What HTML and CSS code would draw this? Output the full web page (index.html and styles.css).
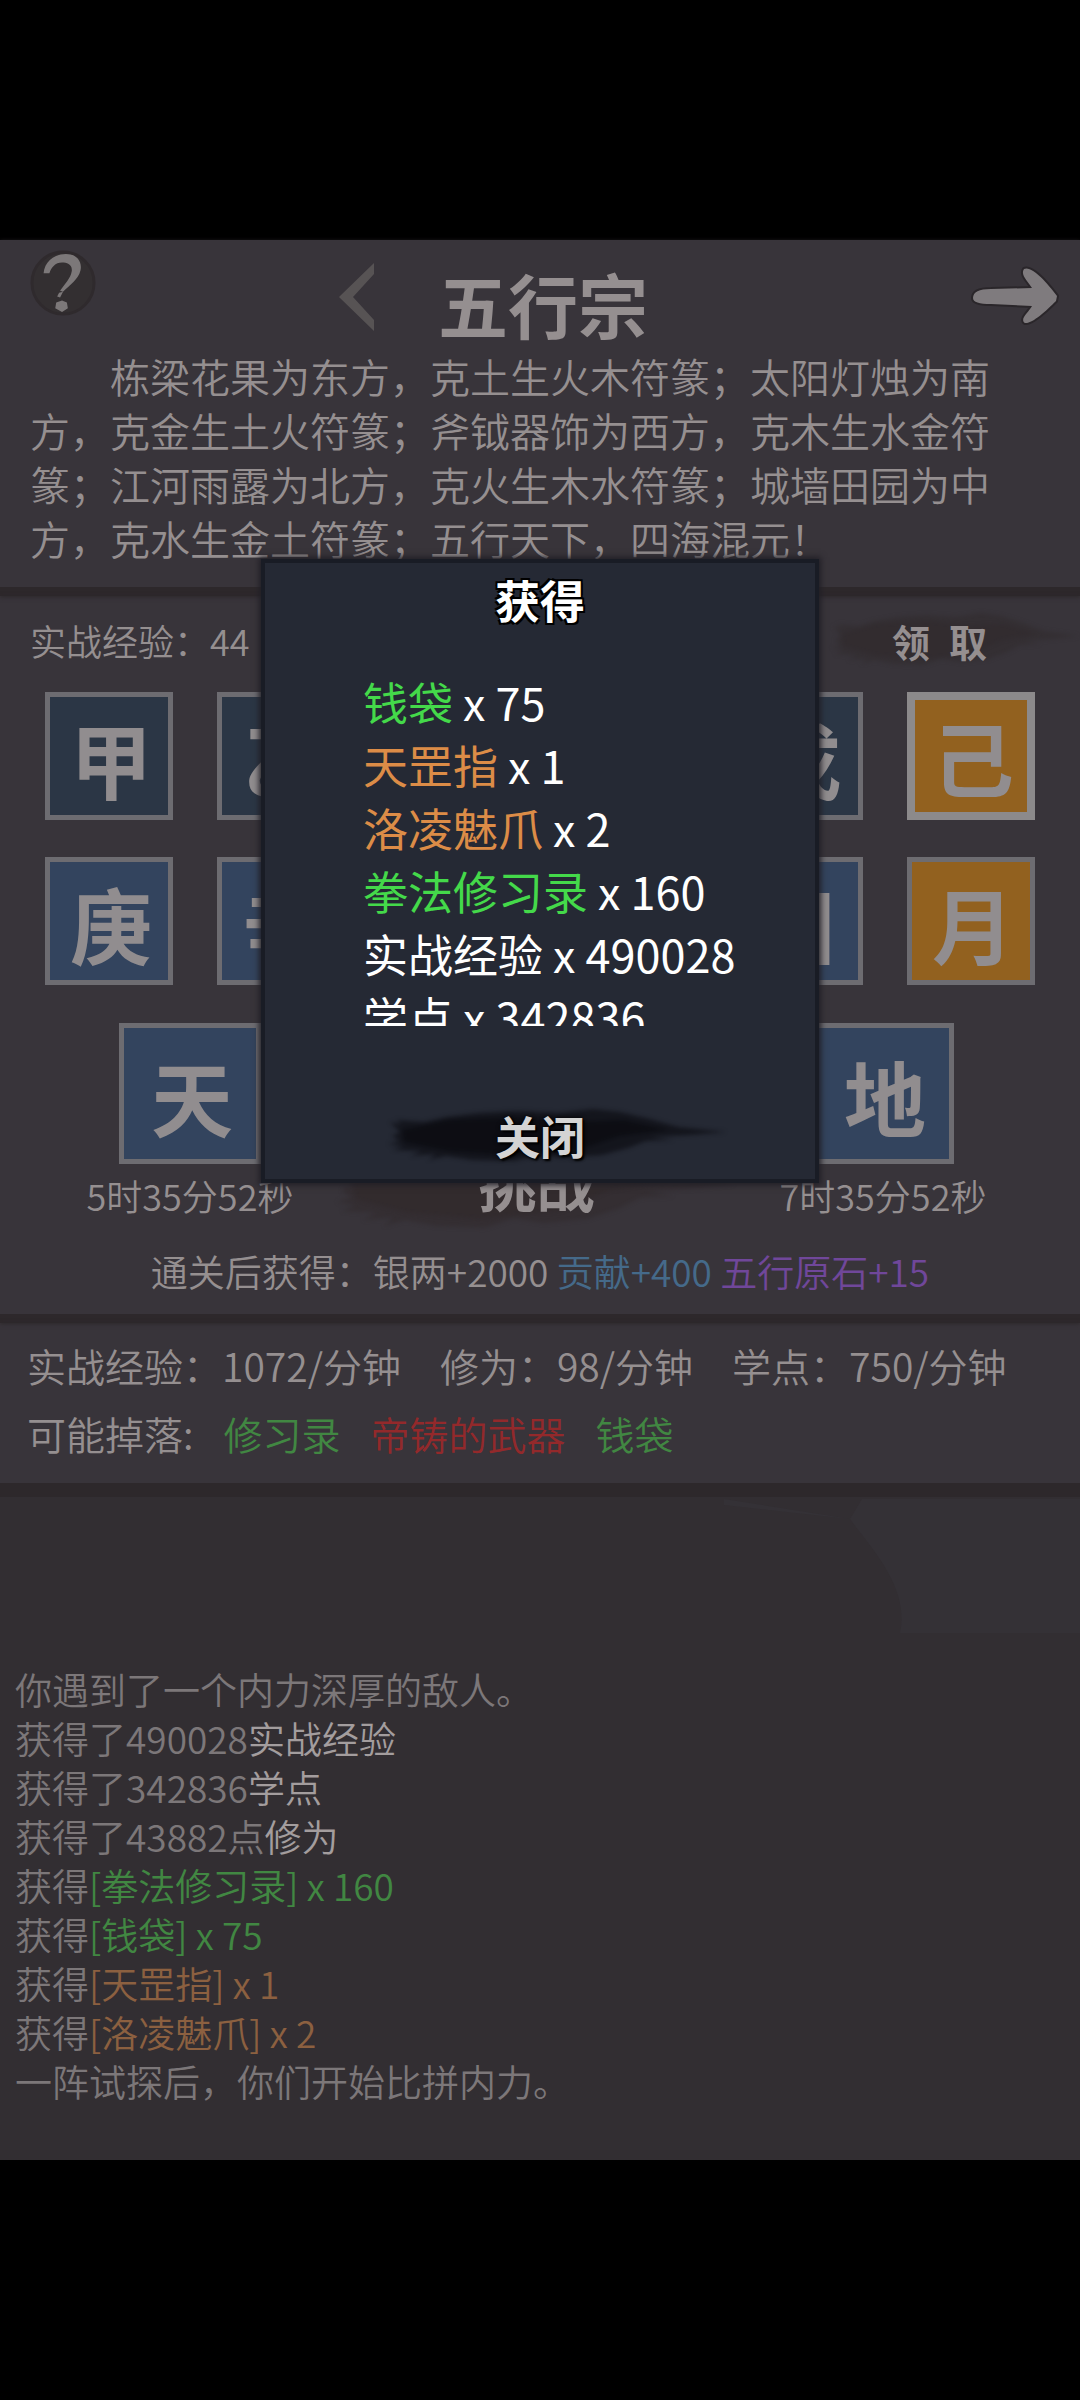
FILE: index.html
```html
<!DOCTYPE html>
<html lang="zh-CN">
<head>
<meta charset="utf-8">
<meta name="viewport" content="width=device-width, initial-scale=1">
<title>五行宗</title>
<link rel="stylesheet" href="styles.css">
</head>
<body>
<svg class="defs" aria-hidden="true">
  <symbol id="brush" viewBox="0 0 340 56" preserveAspectRatio="none">
    <path d="M2 14 L14 17 L8 12 L36 14 L58 9 L90 5 L130 3 L170 5 L205 1 L232 4 L262 11 L290 19 L338 24 L302 27 L262 29 L286 32 L258 33 L240 40 L214 47 L176 50 L150 47 L126 53 L84 52 L58 48 L40 52 L48 46 L22 48 L34 43 L4 42 L16 38 L0 36 L12 33 L4 28 L12 24 Z"/>
    <path d="M14 22 L60 12 L130 9 L190 14 L236 12 L280 22 L232 28 L190 42 L120 47 L60 43 L16 34 Z"/>
  </symbol>
</svg>
<main class="stage">
  <section class="intro panel">
    <header class="topbar">
      <button class="icon help" aria-label="帮助">
        <svg viewBox="0 0 68 68"><circle class="disc" cx="34" cy="34" r="32"/><path class="ink" d="M14 24 C15 12 25 4 37 4 C49 4 54 13 52 21 C50 30 40 37 34 43 L31 42 C36 35 42 29 43 22 C44 15 38 13 33 13 C26 13 22 18 20 24 Z M30 44 L34 43 L31 49 L28 48 Z M27 54 L33 52 L38 54 L39 60 L33 64 L26 60 Z"/></svg>
      </button>
      <button class="icon prev" aria-label="上一个">
        <svg viewBox="0 0 38 70"><path d="M1 35 L36 1 V12 L15 35 L36 58 V69 Z"/></svg>
      </button>
      <h1 class="title">五行宗</h1>
      <button class="icon next" aria-label="下一个">
        <svg viewBox="0 0 96 68"><path class="arrow" d="M7 36 C7 30 13 27 25 27 L66 26 C62 19 54 13 58 7 C65 3 80 19 91 34 L90 39 C80 49 66 62 59 61 C53 57 63 50 66 44 L25 42 C13 42 7 40 7 36 Z"/></svg>
      </button>
    </header>
    <p class="story">栋梁花果为东方，克土生火木符篆；太阳灯烛为南方，克金生土火符篆；斧钺器饰为西方，克木生水金符篆；江河雨露为北方，克火生木水符篆；城墙田园为中方，克水生金土符篆；五行天下，四海混元！</p>
  </section>

  <section class="arena panel">
    <div class="exp-row">
      <span class="exp">实战经验：44</span>
      <button class="brush-btn claim"><svg class="brush"><use href="#brush"/></svg><span>领&ensp;取</span></button>
    </div>
    <div class="tiles">
      <button class="tile dark">甲</button><button class="tile dark">乙</button><button class="tile dark">丙</button><button class="tile dark">丁</button><button class="tile dark">戊</button><button class="tile gold selected">己</button>
      <button class="tile">庚</button><button class="tile">辛</button><button class="tile">壬</button><button class="tile">癸</button><button class="tile">日</button><button class="tile gold">月</button>
    </div>
    <div class="big-tiles">
      <div class="gate"><button class="tile big">天</button><span class="timer">5时35分52秒</span></div>
      <button class="brush-btn challenge"><svg class="brush"><use href="#brush"/></svg><span>挑战</span></button>
      <div class="gate"><button class="tile big">地</button><span class="timer">7时35分52秒</span></div>
    </div>
    <p class="reward">通关后获得：银两+2000 <span class="blue">贡献+400</span> <span class="purple">五行原石+15</span></p>
  </section>

  <section class="rates panel">
    <ul class="row stats"><li>实战经验：1072/分钟</li><li>修为：98/分钟</li><li>学点：750/分钟</li></ul>
    <ul class="row drops"><li>可能掉落:</li><li class="green">修习录</li><li class="red">帝铸的武器</li><li class="green">钱袋</li></ul>
  </section>

  <section class="log">
    <svg class="wash" viewBox="0 0 360 140" aria-hidden="true"><path d="M4 2 L130 22 L142 2 L360 2 L360 136 L180 136 C190 90 150 50 130 22 L4 8 Z"/></svg>
    <p>你遇到了一个内力深厚的敌人。</p>
    <p>获得了490028<span class="bright">实战经验</span></p>
    <p>获得了342836<span class="bright">学点</span></p>
    <p>获得了43882点<span class="bright">修为</span></p>
    <p>获得<span class="green">[拳法修习录] x 160</span></p>
    <p>获得<span class="green">[钱袋] x 75</span></p>
    <p>获得<span class="orange">[天罡指] x 1</span></p>
    <p>获得<span class="orange">[洛凌魅爪] x 2</span></p>
    <p>一阵试探后，你们开始比拼内力。</p>
  </section>

  <div class="dialog" role="dialog" aria-modal="true" aria-labelledby="dialog-title">
    <h2 class="dialog-title" id="dialog-title">获得</h2>
    <ul class="loot">
      <li><span class="lime">钱袋</span> x 75</li>
      <li><span class="amber">天罡指</span> x 1</li>
      <li><span class="amber">洛凌魅爪</span> x 2</li>
      <li><span class="lime">拳法修习录</span> x 160</li>
      <li>实战经验 x 490028</li>
      <li>学点 x 342836</li>
    </ul>
    <button class="brush-btn close"><svg class="brush"><use href="#brush"/></svg><span>关闭</span></button>
  </div>
</main>
</body>
</html>
```

FILE: styles.css
```css
* { box-sizing: border-box; }

body {
  margin: 0;
  min-height: 100vh;
  padding: 10vh 0;
  display: flex;
  flex-direction: column;
  background: #000;
  color: #958f90;
  font-family: "Noto Sans CJK SC", sans-serif;
  font-weight: 350;
}

h1, h2, p, ul { margin: 0; padding: 0; }
ul { list-style: none; }

button {
  padding: 0;
  border: 0;
  background: none;
  color: inherit;
  font: inherit;
  cursor: pointer;
}

.defs { position: absolute; width: 0; height: 0; }

.stage {
  position: relative;
  flex: 1;
  display: flex;
  flex-direction: column;
  background: #38343a;
}

.panel { border-bottom: 9px solid #2d282b; box-shadow: 0 1px 4px #2d282b; }

.green { color: #418742; }
.red { color: #93292b; }
.orange { color: #8c6040; }
.blue { color: #456a8a; }
.purple { color: #70479a; }
.bright { color: #a39d9e; }
.lime { color: #44d94a; }
.amber { color: #dc8c47; }

/* intro */
.intro { padding: 10px 18px 0 30px; height: 356px; }

.topbar { display: flex; align-items: flex-start; height: 99px; }
.icon { display: block; }
.icon svg { display: block; width: 100%; }
.help { width: 66px; }
.disc { fill: #332f31; stroke: #2f2a2d; stroke-width: 3; }
.ink { fill: #7c7879; }
.prev { width: 38px; margin: 12px 0 0 242px; }
.prev path { fill: #575354; }
.title {
  margin: 4px auto 0 62px;
  font-size: 70px;
  line-height: 100px;
  font-weight: 700;
}
.next { width: 96px; margin-top: 12px; }
.arrow { fill: #7f7b7e; stroke: #2a262a; stroke-width: 4; stroke-linejoin: round; paint-order: stroke; }

.story { width: 970px; max-width: 100%; font-size: 40px; line-height: 54px; text-indent: 2em; }

/* arena */
.arena { padding-bottom: 18px; }

.exp-row {
  display: flex;
  align-items: center;
  justify-content: space-between;
  height: 94px;
  padding: 0 0 6px 30px;
  font-size: 36px;
}

.brush-btn { position: relative; display: block; font-weight: 700; }
.brush-btn span { position: relative; }
.brush { position: absolute; inset: 0; width: 100%; height: 100%; fill: #2f292b; fill-opacity: 0.5; filter: blur(2px); }

.claim { width: 248px; height: 56px; padding-right: 33px; font-size: 38px; }

.tiles {
  display: grid;
  grid-template-columns: repeat(6, 128px);
  justify-content: space-between;
  row-gap: 37px;
  padding: 2px 45px 0;
}

.tile {
  height: 128px;
  padding: 4px 0 0 4px;
  border: 5px solid #6d6c71;
  background: #33445e;
  color: #918d8f;
  font-size: 82px;
  line-height: 108px;
  font-weight: 700;
}
.dark { background: #2b3645; }
.gold { background: #92611f; }
.selected { border: 8px solid #8c8a8b; padding-top: 0; }

.big-tiles { display: flex; justify-content: space-between; padding: 38px 93px 0 86px; }
.gate { display: flex; flex-direction: column; align-items: center; width: 208px; }
.big { width: 142px; height: 141px; line-height: 118px; }
.timer { margin-top: 6px; font-size: 36px; line-height: 50px; white-space: nowrap; }
.challenge { align-self: flex-end; width: 400px; height: 84px; margin-bottom: -12px; font-size: 58px; line-height: 84px; }
.challenge .brush { fill: #302829; }
.challenge span { top: -8px; }

.reward { padding-top: 26px; text-align: center; font-size: 37px; line-height: 50px; white-space: nowrap; }

/* rates */
.rates { height: 174px; padding: 8px 27px 0; font-size: 39px; line-height: 68px; border-bottom-width: 14px; }
.row { display: flex; white-space: nowrap; }
.stats { gap: 39px; }
.drops { gap: 30px; }

/* log */
.log {
  position: relative;
  flex: 1;
  padding: 168px 15px 40px;
  background: #322e32;
  color: #7c7779;
  font-size: 37px;
  line-height: 49px;
}
.log p { position: relative; }
.wash { position: absolute; top: 0; right: 0; width: 360px; fill: #343136; }

/* dialog */
.dialog {
  position: absolute;
  top: 319px;
  left: 50%;
  width: 558px;
  height: 624px;
  transform: translateX(-50%);
  display: flex;
  flex-direction: column;
  align-items: center;
  border: 4px solid #191c25;
  background: #252934;
  box-shadow: 0 0 6px 2px #211f26;
  color: #fff;
}
.dialog-title {
  padding-top: 5px;
  font-size: 45px;
  line-height: 64px;
  font-weight: 700;
  text-shadow: 2px 2px 0 #000, -2px -2px 0 #000, 2px -2px 0 #000, -2px 2px 0 #000;
}
.loot {
  align-self: stretch;
  height: 356px;
  margin: 38px 0 0 98px;
  overflow: hidden;
  font-size: 45px;
  line-height: 63px;
  font-weight: 400;
  white-space: nowrap;
}
.close { width: 340px; height: 56px; margin-top: 82px; color: #d4d4d4; font-size: 45px; line-height: 56px; }
.close span { text-shadow: 0 0 4px #000, 2px 2px 2px #000; }
.close .brush { left: 18px; fill: #08090d; fill-opacity: 0.6; }
```
